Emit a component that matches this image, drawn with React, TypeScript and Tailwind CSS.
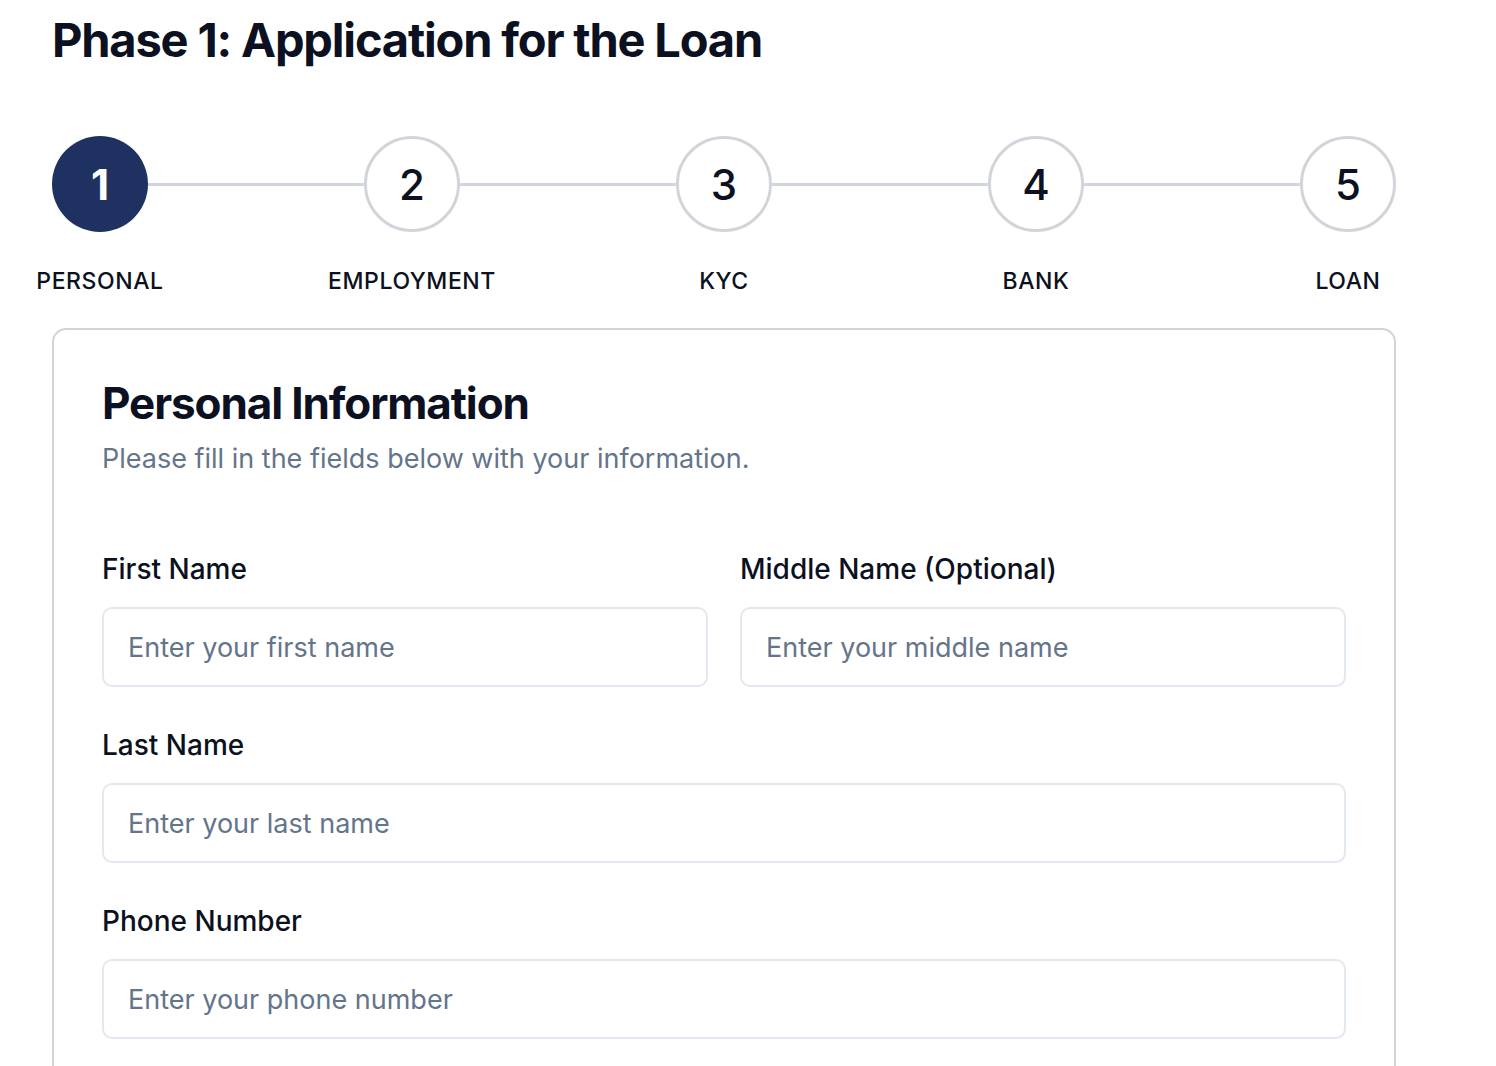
import React from "react";

const steps = [
  { n: 1, label: "PERSONAL" },
  { n: 2, label: "EMPLOYMENT" },
  { n: 3, label: "KYC" },
  { n: 4, label: "BANK" },
  { n: 5, label: "LOAN" },
];

const Field = ({
  label,
  placeholder,
}: {
  label: string;
  placeholder: string;
}) => (
  <div className="flex flex-col gap-[20px]">
    <label className="text-[28px] leading-[36px] font-medium text-[#0b1120]">
      {label}
    </label>
    <input
      type="text"
      placeholder={placeholder}
      className="h-[80px] w-full rounded-[10px] border-2 border-[#e2e8f0] bg-white px-[24px] text-[27px] text-[#0b1120] placeholder:text-[#64748b] outline-none"
    />
  </div>
);

const App = () => {
  return (
    <div
      className="min-h-screen bg-white text-[#0b1120]"
      style={{ fontFamily: "Inter, 'Noto Sans', sans-serif" }}
    >
      <div className="ml-[52px] w-[1344px] pt-[12px]">
        <h1 className="text-[47px] leading-[56px] font-bold tracking-tight">
          Phase 1: Application for the Loan
        </h1>

        {/* stepper */}
        <div className="mt-[68px] flex items-center">
          {steps.map((s, i) => (
            <React.Fragment key={s.n}>
              {i > 0 && <div className="h-[3px] flex-1 bg-[#d1d5db]" />}
              {i === 0 ? (
                <div className="flex h-[96px] w-[96px] items-center justify-center rounded-full bg-[#1f3161] text-[42px] font-bold text-white">
                  {s.n}
                </div>
              ) : (
                <div className="flex h-[96px] w-[96px] items-center justify-center rounded-full border-[3px] border-[#d1d5db] bg-white text-[42px] font-medium text-[#0b1120]">
                  {s.n}
                </div>
              )}
            </React.Fragment>
          ))}
        </div>
        <div className="mt-[34px] flex">
          {steps.map((s, i) => (
            <React.Fragment key={s.n}>
              {i > 0 && <div className="flex-1" />}
              <div className="flex w-[96px] justify-center">
                <span className="whitespace-nowrap text-[23px] leading-[30px] font-medium tracking-wide text-[#0b1120]">
                  {s.label}
                </span>
              </div>
            </React.Fragment>
          ))}
        </div>

        {/* card */}
        <div className="mt-[32px] rounded-[14px] border-2 border-[#d1d5db] px-[48px] pt-[47px] pb-[64px]">
          <h2 className="text-[44px] leading-[52px] font-bold tracking-tight text-[#0b1120]">
            Personal Information
          </h2>
          <p className="mt-[12px] text-[27px] leading-[36px] text-[#64748b]">
            Please fill in the fields below with your information.
          </p>

          <div className="mt-[74px] flex flex-col gap-[40px]">
            <div className="grid grid-cols-2 gap-[32px]">
              <Field label="First Name" placeholder="Enter your first name" />
              <Field
                label="Middle Name (Optional)"
                placeholder="Enter your middle name"
              />
            </div>
            <Field label="Last Name" placeholder="Enter your last name" />
            <Field label="Phone Number" placeholder="Enter your phone number" />
          </div>
        </div>
      </div>
    </div>
  );
};

export default App;
